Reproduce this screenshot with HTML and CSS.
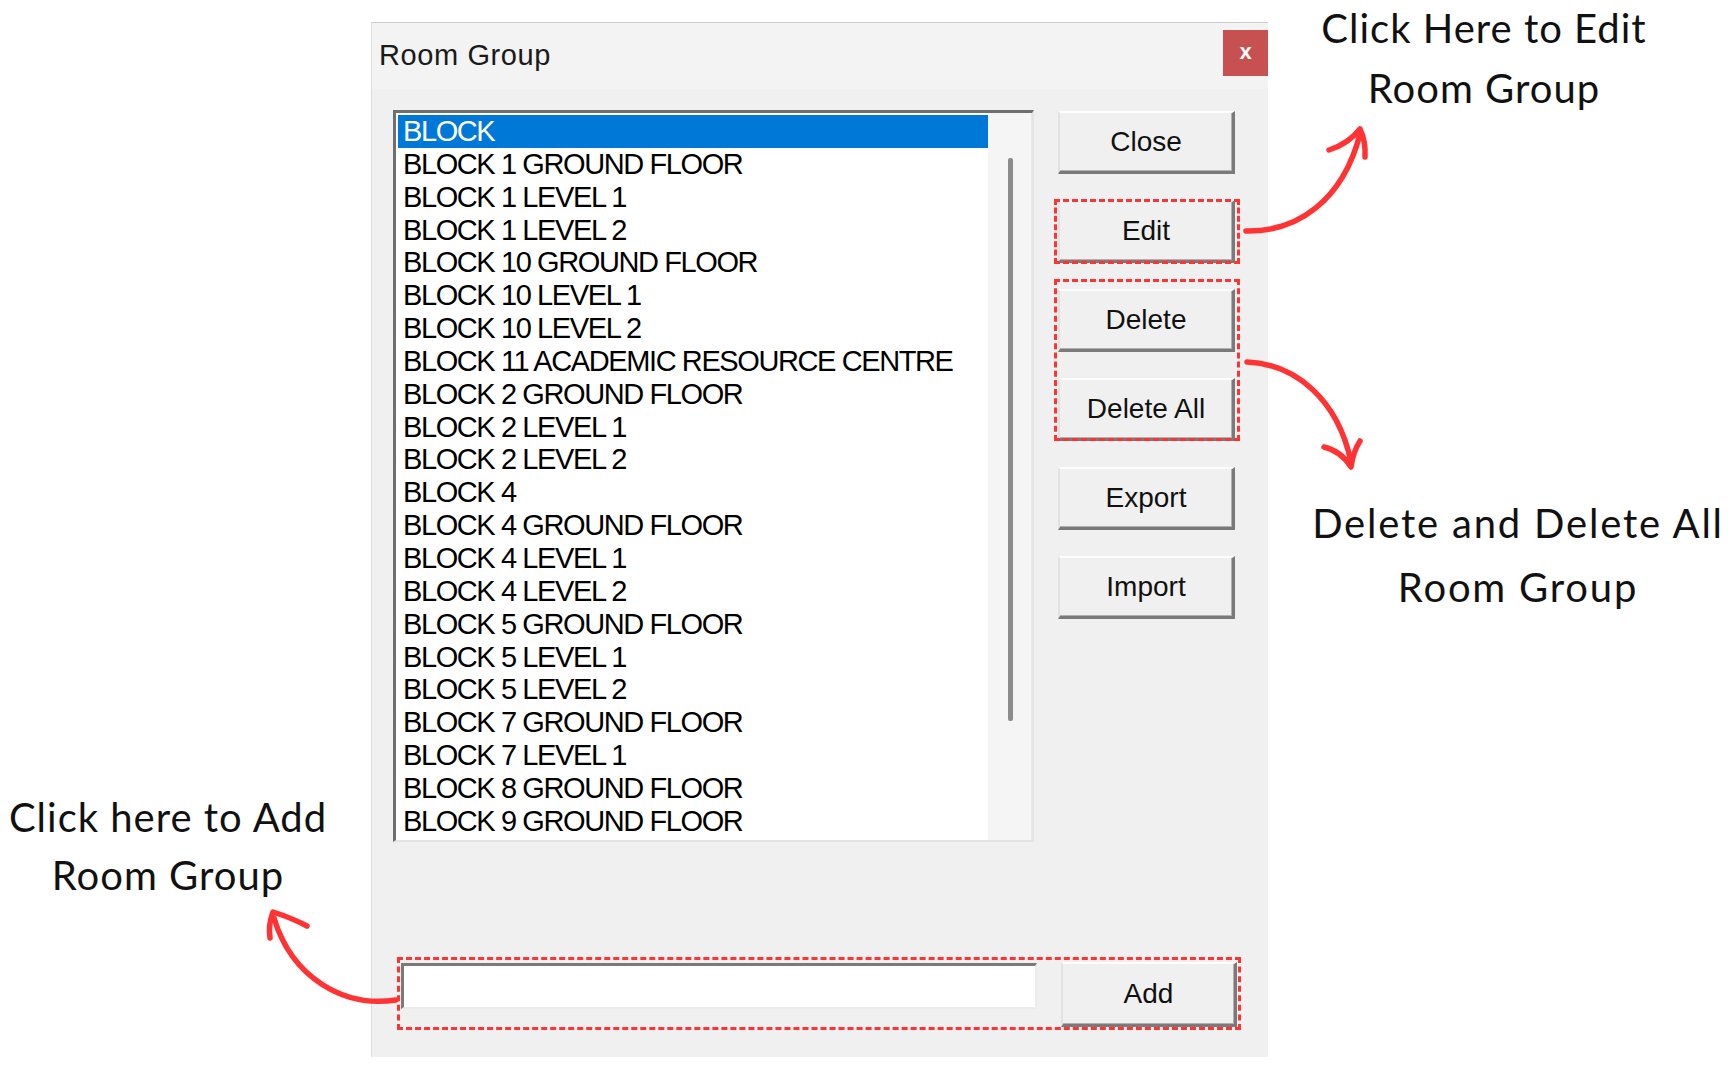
FILE: index.html
```html
<!DOCTYPE html>
<html lang="en">
<head>
    <meta charset="UTF-8">
    <title>Room Group</title>
    <link rel="stylesheet" href="styles.css">
</head>
<body>
    <div class="canvas">
        <div class="dialog">
            <div class="titlebar">
                <span class="title">Room Group</span>
                <span class="close-x">x</span>
            </div>
            <div class="dialog-body">
                <div class="main-row">
                    <div class="listbox">
                        <ul class="items">
                            <li class="selected">BLOCK</li>
                            <li>BLOCK 1 GROUND FLOOR</li>
                            <li>BLOCK 1 LEVEL 1</li>
                            <li>BLOCK 1 LEVEL 2</li>
                            <li>BLOCK 10 GROUND FLOOR</li>
                            <li>BLOCK 10 LEVEL 1</li>
                            <li>BLOCK 10 LEVEL 2</li>
                            <li>BLOCK 11 ACADEMIC RESOURCE CENTRE</li>
                            <li>BLOCK 2 GROUND FLOOR</li>
                            <li>BLOCK 2 LEVEL 1</li>
                            <li>BLOCK 2 LEVEL 2</li>
                            <li>BLOCK 4</li>
                            <li>BLOCK 4 GROUND FLOOR</li>
                            <li>BLOCK 4 LEVEL 1</li>
                            <li>BLOCK 4 LEVEL 2</li>
                            <li>BLOCK 5 GROUND FLOOR</li>
                            <li>BLOCK 5 LEVEL 1</li>
                            <li>BLOCK 5 LEVEL 2</li>
                            <li>BLOCK 7 GROUND FLOOR</li>
                            <li>BLOCK 7 LEVEL 1</li>
                            <li>BLOCK 8 GROUND FLOOR</li>
                            <li>BLOCK 9 GROUND FLOOR</li>
                        </ul>
                        <div class="scroll"><div class="thumb"></div></div>
                    </div>

                    <div class="buttons">
                        <button class="btn">Close</button>
                        <div class="mark mark-edit">
                            <button class="btn">Edit</button>
                        </div>
                        <div class="mark mark-delete">
                            <button class="btn">Delete</button>
                            <button class="btn">Delete All</button>
                        </div>
                        <button class="btn">Export</button>
                        <button class="btn">Import</button>
                    </div>
                </div>

                <div class="mark add-row">
                    <input class="add-input" type="text">
                    <button class="btn btn-add">Add</button>
                </div>
            </div>
        </div>

        <!-- notas y flechas sobre la captura -->
        <div class="note note-edit">Click Here to Edit<br>Room Group</div>
        <div class="note note-delete">Delete and Delete All<br>Room Group</div>
        <div class="note note-add">Click here to Add<br>Room Group</div>

        <svg class="arrows" width="1733" height="1067" viewBox="0 0 1733 1067">
            <g fill="none" stroke="#ff3333" stroke-width="5.5" stroke-linecap="round" stroke-linejoin="round">
                <path d="M1246 231 C1298 232 1343 200 1360 134"/>
                <path d="M1329 150 Q1348 144 1360 129 Q1366 142 1365 157"/>
                <path d="M1247 362 C1296 364 1338 400 1351 462"/>
                <path d="M1324 447 Q1341 451 1351 467 Q1353 452 1360 441"/>
                <path d="M396 1000 C344 1008 292 978 274 918"/>
                <path d="M270 938 Q268 925 273 912 Q292 918 307 926"/>
            </g>
        </svg>
    </div>
</body>
</html>
```

FILE: styles.css
```css
* {
    margin: 0;
    padding: 0;
    box-sizing: border-box;
}

body {
    background: #fff;
    font-family: "Liberation Sans", Arial, sans-serif;
}

.canvas {
    position: relative;
    width: 1733px;
    height: 1067px;
    overflow: hidden;
}

/* ventana */
.dialog {
    margin-left: 371px;
    margin-top: 22px;
    width: 897px;
    height: 1035px;
    background: #f0f0f0;
    border-top: 1px solid #cdcdcd;
    border-left: 1px solid #dcdcdc;
}

.titlebar {
    height: 66px;
    background: #f3f3f3;
    display: flex;
    justify-content: space-between;
    align-items: flex-start;
}

.title {
    margin-left: 7px;
    line-height: 64px;
    font-size: 29px;
    letter-spacing: 0.6px;
    color: #1a1a1a;
}

.close-x {
    margin-top: 7px;
    width: 45px;
    height: 46px;
    background: #c75050;
    color: #fff;
    font-weight: 700;
    font-size: 22px;
    line-height: 44px;
    text-align: center;
}

.dialog-body {
    padding: 21px 0 0 21px;
}

.main-row {
    display: flex;
    align-items: flex-start;
}

/* lista */
.listbox {
    width: 641px;
    height: 732px;
    display: flex;
    background: #fff;
    border-top: 3px solid #6f6f6f;
    border-left: 3px solid #6f6f6f;
    border-right: 2px solid #e4e4e4;
    border-bottom: 2px solid #e4e4e4;
}

.items {
    flex: 1;
    list-style: none;
    padding: 2px 0 0 2px;
}

.items li {
    height: 32.85px;
    line-height: 32.85px;
    padding-left: 5px;
    font-size: 29px;
    letter-spacing: -1.4px;
    color: #000;
    white-space: nowrap;
}

.items li.selected {
    background: #0078d7;
    color: #fff;
}

.scroll {
    width: 44px;
    background: #f5f5f5;
    border-right: 1px solid #e8e8e8;
}

.thumb {
    margin: 45px 0 0 20px;
    width: 5px;
    height: 563px;
    background: #8c8c8c;
    border-radius: 2px;
}

/* botones */
.buttons {
    margin-left: 24px;
    padding-top: 1px;
    display: flex;
    flex-direction: column;
    gap: 26px;
}

.btn {
    width: 177px;
    height: 63px;
    background: #f0f0f0;
    border-style: solid;
    border-width: 2px 3px 3px 2px;
    border-color: #fdfdfd #7a7a7a #7a7a7a #e2e2e2;
    box-shadow: inset -1px -1px 0 #b0b0b0;
    font-family: "Liberation Sans", Arial, sans-serif;
    font-size: 28px;
    color: #111;
}

.mark {
    position: relative;
}

.mark::after {
    content: "";
    position: absolute;
    border: 3px dashed #ff3333;
    pointer-events: none;
}

.mark-edit::after {
    top: -1px;
    bottom: -1px;
    left: -4px;
    right: -5px;
}

.mark-delete {
    display: flex;
    flex-direction: column;
    gap: 26px;
}

.mark-delete::after {
    top: -10px;
    bottom: 0;
    left: -4px;
    right: -5px;
}

/* fila de alta */
.add-row {
    margin: 120px 0 0 8px;
    display: flex;
    align-items: flex-start;
    gap: 24px;
    width: 836px;
}

.add-row::after {
    top: -5px;
    bottom: -3px;
    left: -4px;
    right: -4px;
}

.add-input {
    margin-top: 1px;
    width: 636px;
    height: 46px;
    background: #fff;
    border-style: solid;
    border-width: 3px 2px 2px 3px;
    border-color: #7a7a7a #ececec #ececec #7a7a7a;
    outline: none;
}

.btn-add {
    width: 176px;
    height: 65px;
}

/* anotaciones */
.note {
    position: absolute;
    font-family: Lato, "Open Sans", sans-serif;
    font-size: 40px;
    letter-spacing: 1px;
    line-height: 60px;
    text-align: center;
    color: #111;
    white-space: nowrap;
}

.note-edit {
    top: -2px;
    left: 1284px;
    width: 400px;
}

.note-delete {
    top: 491px;
    left: 1298px;
    width: 440px;
    line-height: 64px;
    letter-spacing: 1.8px;
}

.note-add {
    top: 788px;
    left: 0;
    width: 336px;
    line-height: 58px;
}

.arrows {
    position: absolute;
    top: 0;
    left: 0;
    pointer-events: none;
}
```
